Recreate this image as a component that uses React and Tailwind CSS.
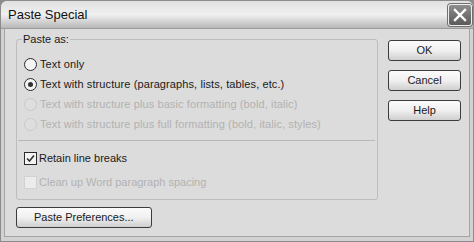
import React from "react";

function Radio({ checked, disabled, label }) {
  return (
    <div className="flex items-center h-[20px]">
      <span
        className={`w-[13px] h-[13px] rounded-full border flex items-center justify-center mr-[3px] ${
          disabled ? "border-[#cacaca] bg-[#dedede]" : "border-[#2a2a2a] bg-[#f4f4f4]"
        }`}
      >
        {checked && <span className="w-[5px] h-[5px] rounded-full bg-[#333]" />}
      </span>
      <span className={`tracking-[0.1px] ${disabled ? "text-[#b2b2b2]" : "text-[#1a1a1a]"}`}>{label}</span>
    </div>
  );
}

function Check({ checked, disabled, label }) {
  return (
    <div className="flex items-center h-[24px]">
      <span
        className={`w-[13px] h-[13px] border flex items-center justify-center mr-[2px] ${
          disabled ? "border-[#d2d2d2] bg-[#ececec]" : "border-[#2a2a2a] bg-[#f4f4f4]"
        }`}
      >
        {checked && (
          <svg width="9" height="9" viewBox="0 0 9 9">
            <path d="M1 4.5 L3.5 7 L8 1.5" fill="none" stroke="#333" strokeWidth="1.6" />
          </svg>
        )}
      </span>
      <span className={disabled ? "text-[#b2b2b2]" : "text-[#1a1a1a]"}>{label}</span>
    </div>
  );
}

function Button({ children, className = "" }) {
  return (
    <button
      className={`h-[21px] rounded-[3px] border border-[#3c3c3c] bg-gradient-to-b from-[#fbfbfb] via-[#f0f0f0] to-[#cfcfcf] text-[#1a1a1a] ${className}`}
    >
      {children}
    </button>
  );
}

export default function App() {
  return (
    <div
      className="w-[474px] h-[242px] bg-[#8c8c8c] p-[1px] text-[11px] leading-none"
      style={{ fontFamily: '"Liberation Sans", Arial, sans-serif' }}
    >
      <div className="h-full flex flex-col rounded-t-[6px] bg-[#d2d2d2] overflow-hidden">
        {/* title bar */}
        <div className="h-[28px] flex items-center justify-between pl-[7px] pr-[1px] bg-gradient-to-b from-[#e0e0e0] via-[#f0f0f0] to-[#b8b8b8] border-b border-[#9c9c9c]">
          <span className="text-[13px] text-[#111]">Paste Special</span>
          <span className="w-[24px] h-[22px] rounded-[3px] border border-[#eeeeee] bg-gradient-to-b from-[#8e8e8e] to-[#5a5a5a] flex items-center justify-center shadow-[0_0_0_1px_#707070]">
            <svg width="14" height="14" viewBox="0 0 14 14">
              <path d="M2 2 L12 12 M12 2 L2 12" stroke="#fff" strokeWidth="2.4" strokeLinecap="square" />
            </svg>
          </span>
        </div>
        {/* client */}
        <div className="flex-1 mx-[3px] mb-[4px] border border-[#a4a4a4] border-t-0 bg-[#dcdcdc] flex">
          <div className="flex flex-col pl-[11px] pt-[2px] w-[373px]">
            <div className="relative border border-[#bdbdbd] rounded-[3px] mt-[8px] h-[161px] pl-[7px] pr-[4px]">
              <span className="absolute -top-[6px] left-[5px] px-[1px] bg-[#dcdcdc] text-[#1a1a1a]">Paste as:</span>
              <div className="pt-[14px]">
                <Radio label="Text only" />
                <Radio checked label="Text with structure (paragraphs, lists, tables, etc.)" />
                <Radio disabled label="Text with structure plus basic formatting (bold, italic)" />
                <Radio disabled label="Text with structure plus full formatting (bold, italic, styles)" />
              </div>
              <div className="border-t border-[#b8b8b8] mt-[6px] -ml-[6px] -mr-[2px]" />
              <div className="pt-[5px]">
                <Check checked label="Retain line breaks" />
                <Check disabled label="Clean up Word paragraph spacing" />
              </div>
            </div>
            <Button className="mt-[7px] w-[136px] text-left pl-[17px]">Paste Preferences...</Button>
          </div>
          <div className="flex flex-col gap-[9px] pt-[11px] pl-[10px]">
            <Button className="w-[73px]">OK</Button>
            <Button className="w-[73px]">Cancel</Button>
            <Button className="w-[73px]">Help</Button>
          </div>
        </div>
      </div>
    </div>
  );
}
